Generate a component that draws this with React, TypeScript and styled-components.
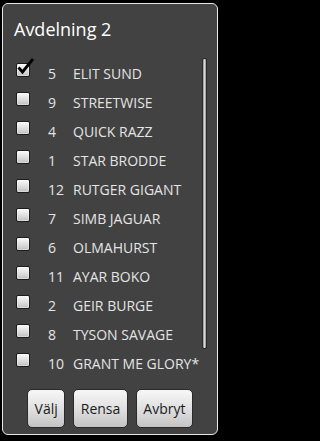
import React from "react";
import styled, { createGlobalStyle } from "styled-components";

const Global = createGlobalStyle`
  html, body { margin: 0; padding: 0; background: #000; }
  body { width: 300px; height: 441px; overflow: hidden; font-family: "Open Sans", "DejaVu Sans", sans-serif; }
`;

const Screen = styled.div`
  width: 300px;
  height: 441px;
  padding: 3px 0 0 2px;
  box-sizing: border-box;
  background: #000;
`;

const Dialog = styled.div`
  position: relative;
  width: 216px;
  height: 432px;
  box-sizing: border-box;
  border: 1px solid #e8e8e8;
  border-radius: 6px;
  background: #424242;
  display: flex;
  flex-direction: column;
`;

const Title = styled.div`
  height: 51px;
  padding: 0 0 0 11px;
  box-sizing: border-box;
  font-size: 18px;
  line-height: 50px;
  color: #fff;
`;

const List = styled.div`
  position: relative;
  display: flex;
  flex-direction: column;
`;

const Row = styled.div`
  height: 29px;
  display: flex;
  align-items: center;
`;

const Box = styled.div`
  position: relative;
  flex: none;
  width: 12px;
  height: 12px;
  margin-left: 13px;
  border: 1px solid #1c1c1c;
  border-radius: 2px;
  background: linear-gradient(#fafafa, #d4d4d4 70%, #bdbdbd);
  box-shadow: inset 0 0 0 1px rgba(255,255,255,0.4);
`;

const Check = styled.svg`
  position: absolute;
  left: 0px;
  top: -6px;
  width: 18px;
  height: 17px;
  overflow: visible;
`;

const Num = styled.span`
  width: 25px;
  margin-left: 18px;
  margin-top: 7px;
  font-size: 14px;
  color: #e4e4e4;
`;

const Name = styled.span`
  margin-top: 7px;
  font-size: 14px;
  color: #e4e4e4;
  white-space: nowrap;
`;

const ScrollThumb = styled.div`
  position: absolute;
  left: 199px;
  top: 3px;
  width: 5px;
  height: 291px;
  border-radius: 2px;
  border: 1px solid #2a2a2a;
  box-sizing: border-box;
  background: linear-gradient(90deg, #8a8a8a, #d8d8d8 50%, #8a8a8a);
`;

const Buttons = styled.div`
  display: flex;
  justify-content: center;
  gap: 8px;
  margin-top: 15px;
`;

const Button = styled.button`
  height: 39px;
  padding: 0 6.5px;
  box-sizing: border-box;
  border: 1px solid #2a2a2a;
  border-radius: 5px;
  background: linear-gradient(#f7f7f7, #e0e0e0 50%, #c4c4c4);
  font-family: "Open Sans", "DejaVu Sans", sans-serif;
  font-size: 14px;
  color: #1c1c1c;
`;

const horses: [string, string, boolean][] = [
  ["5", "ELIT SUND", true],
  ["9", "STREETWISE", false],
  ["4", "QUICK RAZZ", false],
  ["1", "STAR BRODDE", false],
  ["12", "RUTGER GIGANT", false],
  ["7", "SIMB JAGUAR", false],
  ["6", "OLMAHURST", false],
  ["11", "AYAR BOKO", false],
  ["2", "GEIR BURGE", false],
  ["8", "TYSON SAVAGE", false],
  ["10", "GRANT ME GLORY*", false],
];

export default function App() {
  return (
    <Screen>
      <Global />
      <Dialog>
        <Title>Avdelning 2</Title>
        <List>
          {horses.map(([n, name, checked]) => (
            <Row key={n}>
              <Box>
                {checked && (
                  <Check viewBox="0 0 18 17">
                    <path d="M1.5 9.5 L5.5 14 L16 1" fill="none" stroke="#000" strokeWidth="2.8" strokeLinecap="butt" strokeLinejoin="miter" />
                  </Check>
                )}
              </Box>
              <Num>{n}</Num>
              <Name>{name}</Name>
            </Row>
          ))}
          <ScrollThumb />
        </List>
        <Buttons>
          <Button>Välj</Button>
          <Button>Rensa</Button>
          <Button>Avbryt</Button>
        </Buttons>
      </Dialog>
    </Screen>
  );
}
